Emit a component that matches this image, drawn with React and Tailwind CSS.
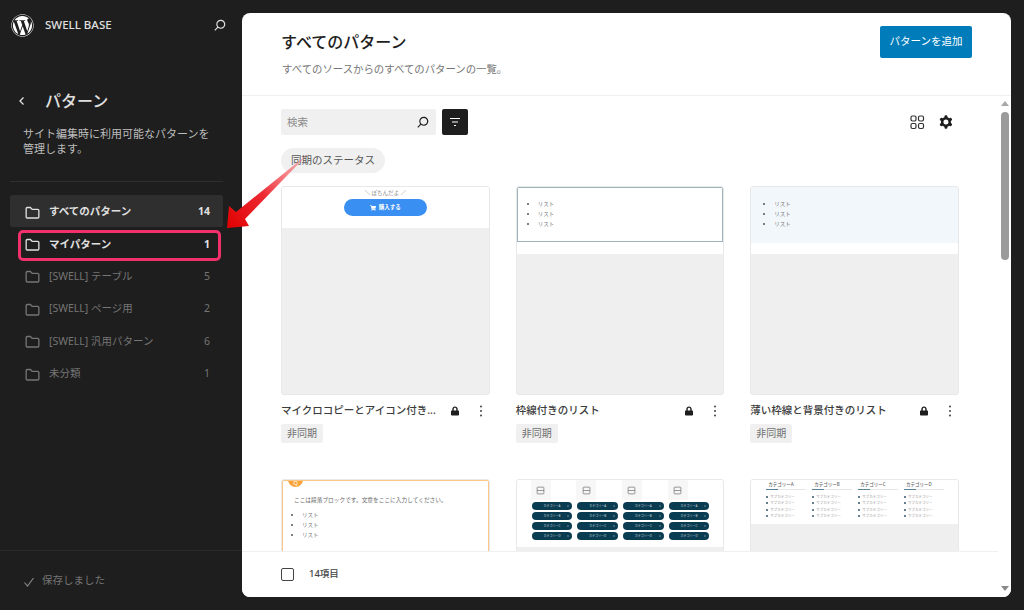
import React from 'react';
import { FaWordpress, FaLock, FaShoppingCart } from 'react-icons/fa';

const fontStack = { fontFamily: '"Noto Sans", "Noto Sans CJK JP", sans-serif' };

const SearchIcon = ({ className }) => (
    <svg viewBox="0 0 24 24" className={className} fill="currentColor">
        <path d="M13 5c-3.3 0-6 2.7-6 6 0 1.4.5 2.7 1.3 3.7l-3.8 3.8 1.1 1.1 3.8-3.8c1 .8 2.3 1.3 3.7 1.3 3.3 0 6-2.7 6-6S16.3 5 13 5zm0 10.5c-2.5 0-4.5-2-4.5-4.5s2-4.5 4.5-4.5 4.5 2 4.5 4.5-2 4.5-4.5 4.5z" />
    </svg>
);

const FolderIcon = ({ className }) => (
    <svg viewBox="0 0 24 24" className={className} fill="none" stroke="currentColor" strokeWidth="1.5">
        <path d="M4.75 7.5c0-.7.55-1.25 1.25-1.25h3.6l2 2.25H18c.7 0 1.25.55 1.25 1.25v7.25c0 .7-.55 1.25-1.25 1.25H6c-.7 0-1.25-.55-1.25-1.25V7.5z" />
    </svg>
);

const folders = [
    { name: 'すべてのパターン', count: 14, tone: 'active' },
    { name: 'マイパターン', count: 1, tone: 'mine' },
    { name: '[SWELL] テーブル', count: 5 },
    { name: '[SWELL] ページ用', count: 2 },
    { name: '[SWELL] 汎用パターン', count: 6 },
    { name: '未分類', count: 1 },
];

// 左のサイドバー
const Sidebar = () => (
    <aside className="w-[242px] shrink-0 flex flex-col h-[610px]">
        <div className="flex items-center h-[50px] pl-[11px] pr-[13px]">
            <FaWordpress className="text-white w-[23px] h-[23px]" />
            <span className="ml-[11px] text-[11.5px] font-medium text-[#e0e0e0]">SWELL BASE</span>
            <SearchIcon className="ml-auto w-[18px] h-[18px] text-[#e0e0e0]" />
        </div>
        <div className="flex items-center mt-[36px] pl-[16px] h-[30px]">
            <svg viewBox="0 0 12 12" className="w-[12px] h-[12px] text-[#e0e0e0]" fill="none" stroke="currentColor" strokeWidth="1.3">
                <path d="M7.5 2.5 4 6l3.5 3.5" />
            </svg>
            <h2 className="ml-[17px] text-[16px] font-medium text-[#e0e0e0]">パターン</h2>
        </div>
        <p className="mt-[10px] pl-[23px] text-[11px] leading-[15px] text-[#bdbdbd] w-[215px]">
            サイト編集時に利用可能なパターンを管理します。
        </p>
        <div className="mt-[25px] mx-[10px] w-[213px] border-t border-[#2f2f2f]" />
        <nav className="mt-[13px] ml-[10px] w-[213px] flex flex-col">
            {folders.map((f) => {
                const bright = f.tone === 'active' || f.tone === 'mine';
                return (
                    <div key={f.name} className={`relative flex items-center h-[32.4px] pt-[2px] pl-[12px] pr-[13px] rounded-[2px] ${f.tone === 'active' ? 'bg-[#2f2f2f]' : ''}`}>
                        {f.tone === 'mine' && (
                            <span className="absolute left-[8px] right-[2px] top-[3px] bottom-[-1px] border-[3px] border-[#f2316c] rounded-[5px]" />
                        )}
                        <FolderIcon className={`w-[21px] h-[21px] shrink-0 ${bright ? 'text-[#e0e0e0]' : 'text-[#757575]'}`} />
                        <span className={`ml-[6px] text-[10.5px] ${bright ? 'font-bold text-[#e0e0e0]' : 'text-[#757575]'}`}>{f.name}</span>
                        <span className={`ml-auto text-[10.5px] ${bright ? 'font-bold text-[#e0e0e0]' : 'text-[#757575]'}`}>{f.count}</span>
                    </div>
                );
            })}
        </nav>
        <div className="mt-auto h-[60px] border-t border-[#2a2a2a] flex items-start pt-[22px] pl-[23px]">
            <svg viewBox="0 0 12 12" className="w-[12px] h-[12px] mt-[3px] text-[#8a8a8a]" fill="none" stroke="currentColor" strokeWidth="1.1">
                <path d="M1.5 6.5 4.5 10l6-8" />
            </svg>
            <span className="ml-[7px] text-[10.5px] text-[#757575]">保存しました</span>
        </div>
    </aside>
);

// カードのプレビュー各種
const TinyList = ({ className = '' }) => (
    <ul className={`list-disc text-[5.5px] leading-[10px] text-[#777] marker:text-[#555] ${className}`}>
        <li>リスト</li>
        <li>リスト</li>
        <li>リスト</li>
    </ul>
);

const PreviewButton = () => (
    <div className="h-[41px] bg-white flex flex-col items-center pt-[1px]">
        <span className="text-[5.5px] leading-[10px] text-[#888]">＼ ぽちんだよ ／</span>
        <span className="mt-[1px] w-[83px] h-[17px] rounded-full bg-[#3a8ff2] text-white text-[5.5px] font-bold flex items-center justify-center gap-[3px]">
            <FaShoppingCart className="w-[6px] h-[6px]" />購入する
        </span>
    </div>
);

const PreviewBordered = () => (
    <div className="h-[67px] bg-white">
        <div className="h-[55px] border-[1.5px] border-[#9db4bd] pt-[11px] pl-[4px]">
            <TinyList className="pl-[16px]" />
        </div>
    </div>
);

const PreviewTinted = () => (
    <div className="h-[67px] bg-white">
        <div className="h-[56px] bg-[#f2f7fb] pt-[12px] pl-[5px]">
            <TinyList className="pl-[18px]" />
        </div>
    </div>
);

const PreviewOrange = () => (
    <div className="relative h-full bg-white border-[1.5px] border-[#fcc684] rounded-[2px] overflow-hidden pl-[11px] pt-[14px]">
        <span className="absolute left-[5px] top-[-9px] w-[15px] h-[15px] rounded-full bg-[#f9a33c] text-white text-[6px] flex items-end justify-center leading-[8px]">Q</span>
        <p className="text-[5.7px] leading-[10px] text-[#666]">ここは段落ブロックです。文章をここに入力してください。</p>
        <TinyList className="mt-[5px] pl-[8px]" />
    </div>
);

const PreviewPills = () => (
    <div className="h-[67px] bg-white grid grid-cols-4 gap-x-[5px] pl-[15px] pr-[14px]">
        {[0, 1, 2, 3].map((col) => (
            <div key={col} className="flex flex-col gap-[2px]">
                <div className="ml-[-1px] w-[20px] h-[20px] bg-[#f7f7f7] flex items-center justify-center">
                    <svg viewBox="0 0 12 12" className="w-[9px] h-[9px] text-[#777]" fill="none" stroke="currentColor" strokeWidth="1">
                        <rect x="1.5" y="1.5" width="9" height="9" rx="1" />
                        <path d="M1.5 6h9" />
                    </svg>
                </div>
                {['A', 'B', 'C', 'D'].map((l) => (
                    <span key={l} className="relative h-[8px] rounded-full bg-[#0b3d52] text-[#c7d5db] text-[3px] flex items-center justify-center">
                        カテゴリー{l}
                        <svg viewBox="0 0 4 4" className="absolute right-[3px] top-[3px] w-[2px] h-[2px] text-[#c7d5db]" fill="none" stroke="currentColor" strokeWidth="1">
                            <path d="M1 0l2 2-2 2" />
                        </svg>
                    </span>
                ))}
            </div>
        ))}
    </div>
);

const PreviewCategories = () => (
    <div className="h-[44px] bg-white grid grid-cols-4 gap-x-[6px] pl-[15px] pr-[14px]">
        {['A', 'B', 'C', 'D'].map((l) => (
            <div key={l}>
                <div className="text-[4.5px] leading-[7px] pl-[2px] text-[#666] font-medium mt-[1px]">カテゴリー{l}</div>
                <div className="h-px bg-[#e6e6e6] mt-[1px] mb-[4px] relative">
                    <span className="absolute left-0 top-0 w-[12px] h-px bg-[#5b8296]" />
                </div>
                {[0, 1, 2, 3].map((i) => (
                    <div key={i} className="flex items-center gap-[2px] text-[3.5px] leading-[6.3px] text-[#999]">
                        <span className="w-[2px] h-[2px] rounded-full bg-[#34566a]" />サブカテゴリー
                    </div>
                ))}
            </div>
        ))}
    </div>
);

const PatternCard = ({ title, preview, height = 209, showMeta = true }) => (
    <div>
        <div className="border border-[#e8e8e8] rounded-[3px] overflow-hidden bg-[#efefef]" style={{ height }}>
            {preview}
        </div>
        {showMeta && (
            <>
                <div className="flex items-center h-[29px] pt-[3px]">
                    <span className="text-[10.5px] font-medium text-[#3c3c3c] flex-1 whitespace-nowrap">{title}</span>
                    <FaLock className="w-[8px] h-[10px] mr-[1px] text-[#1e1e1e]" />
                    <svg viewBox="0 0 12 12" className="ml-[15px] mr-[3px] w-[12px] h-[12px] text-[#444]" fill="currentColor">
                        <circle cx="6" cy="1.6" r="1" />
                        <circle cx="6" cy="6" r="1" />
                        <circle cx="6" cy="10.4" r="1" />
                    </svg>
                </div>
                <div className="flex">
                    <span className="flex items-center h-[19px] px-[6px] bg-[#f0f0f0] rounded-[2px] text-[10px] text-[#6f6f6f]">非同期</span>
                </div>
            </>
        )}
    </div>
);

const ScrollTrack = () => (
    <div className="w-[13px] shrink-0 relative flex flex-col items-center bg-white">
        <span className="mt-[5px] w-0 h-0 border-x-[4px] border-x-transparent border-b-[5px] border-b-[#a8a8a8]" />
        <span className="mt-[6px] w-[8px] h-[148px] rounded-full bg-[#9a9a9a]" />
        <span className="mt-auto mb-[6px] w-0 h-0 border-x-[4px] border-x-transparent border-t-[5px] border-t-[#8a8a8a]" />
    </div>
);

const MainPanel = () => (
    <main className="w-[769px] h-[584px] mt-[13px] bg-white rounded-[8px] overflow-hidden flex flex-col">
        <header className="h-[83px] shrink-0 border-b border-[#f0f0f0] flex items-start pl-[39px] pr-[39px]">
            <div className="pt-[17px]">
                <h1 className="text-[16px] leading-[24px] font-medium text-[#1e1e1e]">すべてのパターン</h1>
                <p className="mt-[8px] ml-[1px] text-[10.4px] leading-[14px] text-[#757575]">すべてのソースからのすべてのパターンの一覧。</p>
            </div>
            <button className="ml-auto mt-[13px] w-[92px] h-[32px] bg-[#007cba] rounded-[2px] text-white text-[10.5px]">パターンを追加</button>
        </header>
        <div className="flex-1 min-h-0 flex">
            <div className="flex-1 min-w-0 flex flex-col">
                <div className="flex-1 min-h-0 overflow-hidden pl-[39px] pr-[39px] pt-[13px]">
                    <div className="flex items-center h-[26px]">
                        <div className="w-[155px] h-[26px] bg-[#f0f0f0] rounded-[2px] flex items-center pl-[6px] pr-[4px]">
                            <span className="text-[10.5px] text-[#8a8a8a] pt-[1px]">検索</span>
                            <SearchIcon className="ml-auto w-[18px] h-[18px] text-[#1e1e1e]" />
                        </div>
                        <button className="ml-[6px] w-[26px] h-[26px] bg-[#1e1e1e] rounded-[2px] flex items-center justify-center">
                            <svg viewBox="0 0 12 12" className="w-[12px] h-[12px] text-white" fill="none" stroke="currentColor" strokeWidth="1.1">
                                <path d="M1 2.5h10M3 6h6M5 9.5h2" />
                            </svg>
                        </button>
                        <svg viewBox="0 0 16 16" className="ml-auto w-[16px] h-[16px] text-[#333]" fill="none" stroke="currentColor" strokeWidth="1.2">
                            <rect x="2" y="2" width="5" height="5" rx="1.4" />
                            <rect x="9.5" y="2" width="5" height="5" rx="1.4" />
                            <rect x="2" y="9.5" width="5" height="5" rx="1.4" />
                            <rect x="9.5" y="9.5" width="5" height="5" rx="1.4" />
                        </svg>
                        <svg viewBox="0 0 24 24" className="ml-[11px] mr-[3px] w-[20px] h-[20px] text-[#1e1e1e]" fill="currentColor">
                            <path fillRule="evenodd" d="M10.289 4.836A1 1 0 0111.275 4h1.306a1 1 0 01.987.836l.244 1.466c.787.26 1.503.679 2.108 1.218l1.393-.522a1 1 0 011.216.437l.653 1.13a1 1 0 01-.23 1.273l-1.148.944a6.025 6.025 0 010 2.435l1.149.946a1 1 0 01.23 1.272l-.653 1.13a1 1 0 01-1.216.437l-1.394-.522c-.605.54-1.32.958-2.108 1.218l-.244 1.466a1 1 0 01-.987.836h-1.306a1 1 0 01-.986-.836l-.244-1.466a5.995 5.995 0 01-2.108-1.218l-1.394.522a1 1 0 01-1.217-.436l-.653-1.131a1 1 0 01.23-1.272l1.149-.946a6.026 6.026 0 010-2.435l-1.148-.944a1 1 0 01-.23-1.272l.653-1.131a1 1 0 011.217-.437l1.393.522a5.994 5.994 0 012.108-1.218l.244-1.466zM14.929 12a3 3 0 11-6 0 3 3 0 016 0z" />
                        </svg>
                    </div>
                    <div className="mt-[13px] flex">
                        <span className="flex items-center h-[25px] px-[10px] rounded-full bg-[#f0f0f0] text-[10.5px] text-[#555]">同期のステータス</span>
                    </div>
                    <div className="mt-[13px] grid grid-cols-3 gap-x-[26px] gap-y-[36px] w-[678px]">
                        <PatternCard title="マイクロコピーとアイコン付き..." preview={<PreviewButton />} />
                        <PatternCard title="枠線付きのリスト" preview={<PreviewBordered />} />
                        <PatternCard title="薄い枠線と背景付きのリスト" preview={<PreviewTinted />} />
                        <PatternCard showMeta={false} preview={<PreviewOrange />} />
                        <PatternCard showMeta={false} preview={<PreviewPills />} />
                        <PatternCard showMeta={false} preview={<PreviewCategories />} />
                    </div>
                </div>
                <footer className="h-[46px] shrink-0 border-t border-[#f0f0f0] bg-white flex items-center pl-[39px]">
                    <span className="w-[13px] h-[13px] border border-[#444] rounded-[2px]" />
                    <span className="ml-[15px] text-[9.5px] font-medium text-[#444]">14項目</span>
                </footer>
            </div>
            <ScrollTrack />
        </div>
    </main>
);

export default function App() {
    return (
        <div className="relative w-[1024px] h-[610px] overflow-hidden bg-[#1e1e1e] flex" style={fontStack}>
            <Sidebar />
            <MainPanel />
            {/* 注釈の赤い矢印 */}
            <svg viewBox="0 0 1024 610" className="absolute inset-0 w-[1024px] h-[610px] pointer-events-none">
                <defs>
                    <linearGradient id="arrowFade" x1="227" y1="228" x2="309" y2="153" gradientUnits="userSpaceOnUse">
                        <stop offset="0" stopColor="#e00000" />
                        <stop offset="0.45" stopColor="#ee2b33" />
                        <stop offset="1" stopColor="#f58a8f" stopOpacity="0.5" />
                    </linearGradient>
                </defs>
                <polygon points="227,228 229,206 236,212 309,153 245,219 249,226" fill="url(#arrowFade)" />
            </svg>
        </div>
    );
}
